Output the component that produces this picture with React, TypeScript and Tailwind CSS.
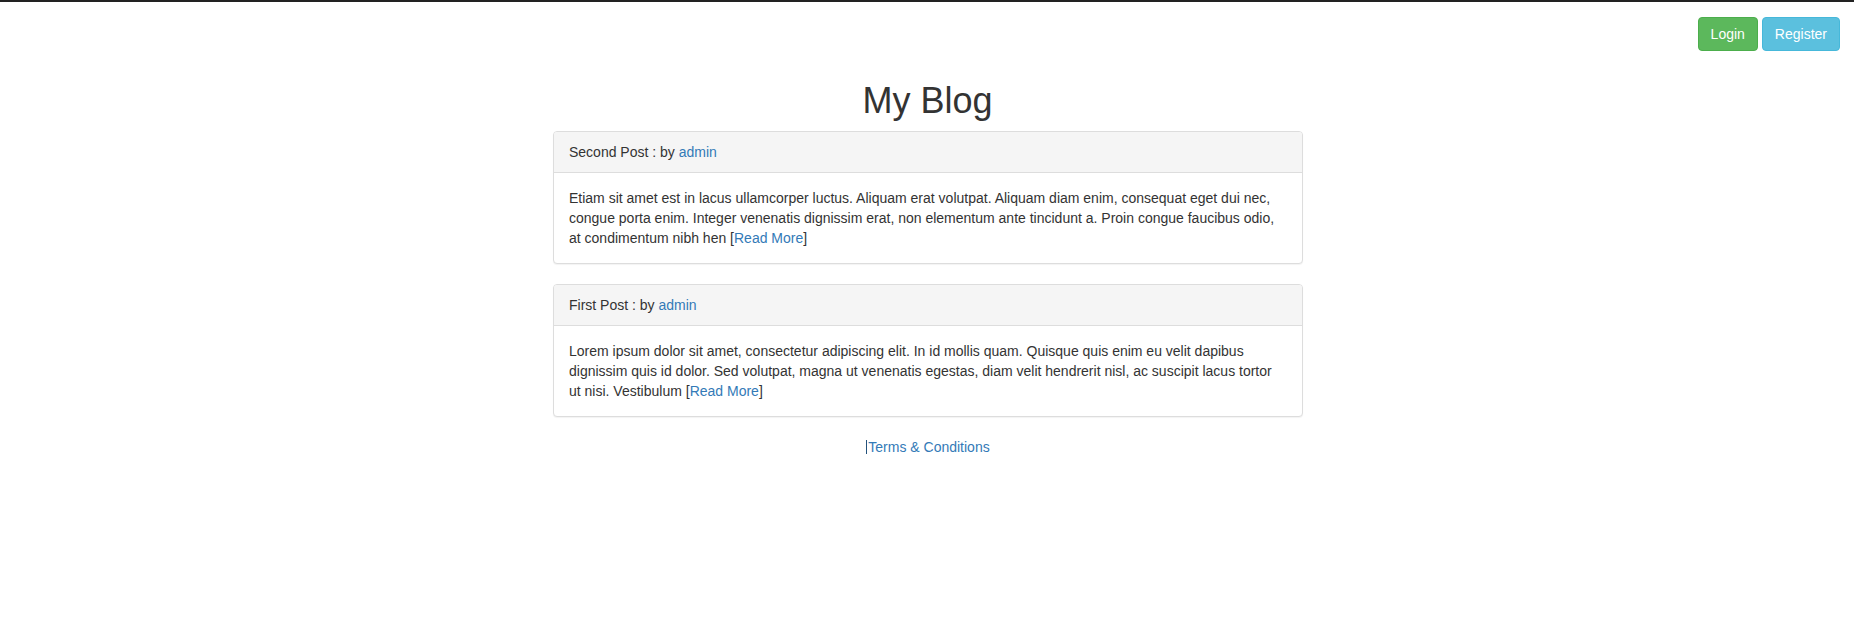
const posts = [
  {
    title: 'Second Post',
    author: 'admin',
    body: 'Etiam sit amet est in lacus ullamcorper luctus. Aliquam erat volutpat. Aliquam diam enim, consequat eget dui nec, congue porta enim. Integer venenatis dignissim erat, non elementum ante tincidunt a. Proin congue faucibus odio, at condimentum nibh hen',
  },
  {
    title: 'First Post',
    author: 'admin',
    body: 'Lorem ipsum dolor sit amet, consectetur adipiscing elit. In id mollis quam. Quisque quis enim eu velit dapibus dignissim quis id dolor. Sed volutpat, magna ut venenatis egestas, diam velit hendrerit nisl, ac suscipit lacus tortor ut nisi. Vestibulum',
  },
]

export default function App() {
  return (
    <div className="min-h-screen bg-white font-['Liberation_Sans',Arial,sans-serif] text-[14px] leading-[20px] text-[#333]">
      <div className="h-[2px] bg-[#222]" />

      <div className="flex justify-end gap-[4px] pr-[14px] pt-[15px]">
        <button className="h-[34px] rounded-[4px] border border-[#4cae4c] bg-[#5cb85c] px-[12px] text-white">
          Login
        </button>
        <button className="h-[34px] rounded-[4px] border border-[#46b8da] bg-[#5bc0de] px-[12px] text-white">
          Register
        </button>
      </div>

      <h1 className="mb-[10px] mt-[30px] pl-[1px] text-center text-[36px] font-medium leading-[1.1]">My Blog</h1>

      <div className="mx-auto w-[750px] translate-x-[1px]">
        {posts.map((post) => (
          <div
            key={post.title}
            className="mb-[20px] rounded-[4px] border border-[#ddd] bg-white shadow-[0_1px_1px_rgba(0,0,0,0.05)]"
          >
            <div className="rounded-t-[3px] border-b border-[#ddd] bg-[#f5f5f5] px-[15px] py-[10px]">
              {post.title} : by{' '}
              <a href="#" className="text-[#337ab7]">
                {post.author}
              </a>
            </div>
            <div className="p-[15px]">
              {post.body} [
              <a href="#" className="text-[#337ab7]">
                Read More
              </a>
              ]
            </div>
          </div>
        ))}

        <div className="flex items-center justify-center">
          <span className="mr-[1px] h-[14px] w-px bg-[#23527c]" />
          <a href="#" className="text-[#337ab7]">
            Terms &amp; Conditions
          </a>
        </div>
      </div>
    </div>
  )
}
